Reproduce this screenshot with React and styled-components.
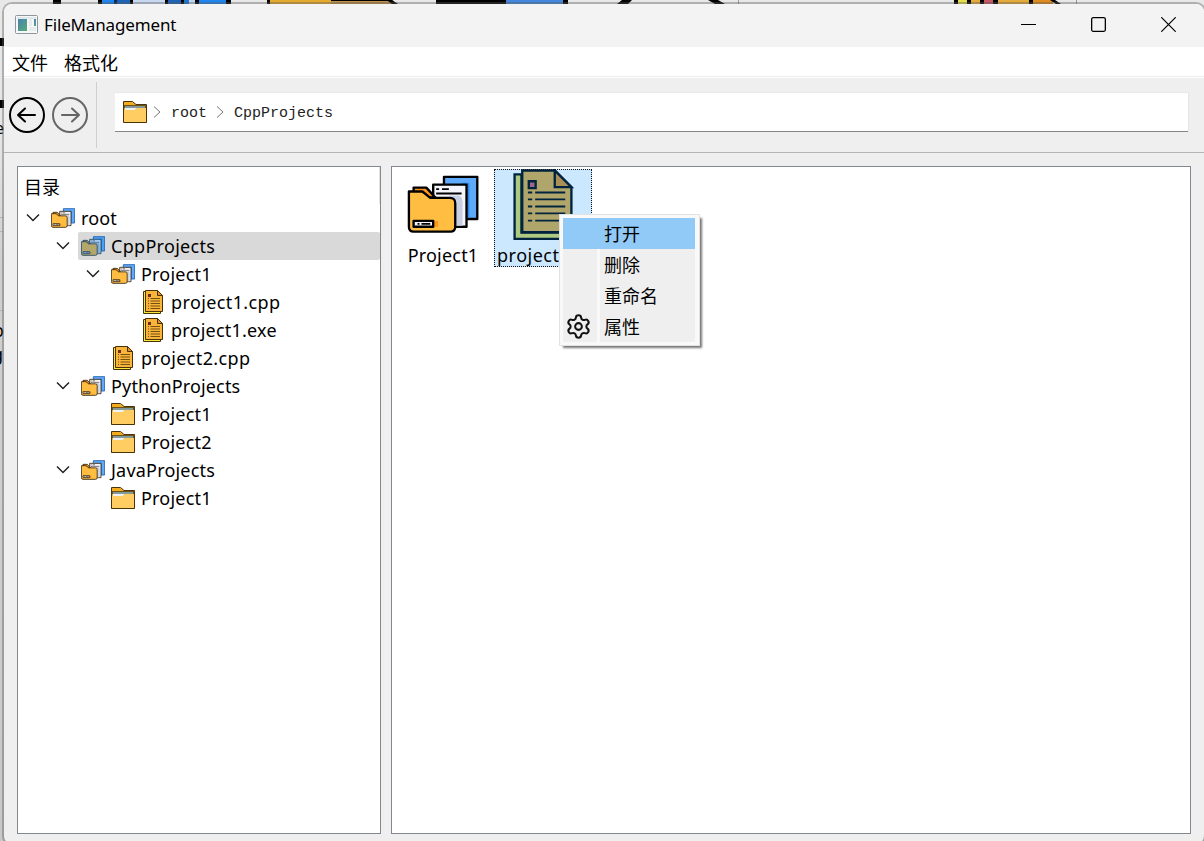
import React from 'react';
import styled, { createGlobalStyle, css } from 'styled-components';
import { Settings } from 'lucide-react';

const Global = createGlobalStyle`
  * { box-sizing: border-box; }
  body { margin: 0; overflow: hidden; }
`;

const Desktop = styled.div`
  position: relative;
  width: 1204px;
  height: 841px;
  overflow: hidden;
  padding: 2px 0 0 2px;
  background: linear-gradient(#e8e8e8, #e4e4e4 150px, #cfcfcf 260px, #cfcfcf 460px, #c8c8c8);
  font-family: 'Noto Sans', 'Noto Sans CJK SC', sans-serif;
  font-size: 18px;
  color: #000;
`;

const Backdrop = styled.svg`
  position: absolute;
  left: 0;
  top: 0;
`;

const Window = styled.div`
  position: relative;
  display: flex;
  flex-direction: column;
  width: 1204px;
  height: 844px;
  border: 2px solid rgba(90, 90, 90, 0.4);
  border-radius: 10px;
  background: #efefef;
  background-clip: padding-box;
  overflow: hidden;
`;

const TitleBar = styled.header`
  display: flex;
  align-items: center;
  height: 43px;
  flex: none;
  padding: 0 1px 2px 11px;
  background: #f3f3f3;
`;

const Title = styled.span`
  flex: 1;
  margin: 0 0 0 6px;
  font-size: 17px;
  letter-spacing: -0.15px;
`;

const Caption = styled.button`
  display: flex;
  align-items: center;
  justify-content: center;
  width: 70px;
  height: 41px;
  padding: 0;
  border: 0;
  background: none;
`;

const MenuBar = styled.nav`
  display: flex;
  align-items: center;
  gap: 16px;
  height: 31px;
  flex: none;
  padding: 0 8px 2px;
  background: linear-gradient(#fff 29px, #eeeeee 29px, #eeeeee 30px, #fff 30px);
`;

const ToolBar = styled.div`
  display: flex;
  align-items: center;
  height: 75px;
  flex: none;
  padding-left: 4px;
  border-bottom: 1px solid #b4b4b4;
`;

const RoundButton = styled.button`
  display: flex;
  width: 38px;
  height: 38px;
  margin-right: 5px;
  padding: 0;
  border: 0;
  background: none;
  color: ${(p) => (p.$muted ? '#666' : '#000')};
`;

const Divider = styled.i`
  width: 1px;
  height: 66px;
  margin: 0 18px 0 2px;
  background: #cfcfcf;
`;

const Address = styled.div`
  display: flex;
  align-items: center;
  width: 1073px;
  height: 39px;
  margin-bottom: 5px;
  padding-left: 8px;
  background: #fff;
  border-bottom: 1px solid #858585;
  box-shadow: 0 -1px #e9e9e9, 1px 0 #e5e5e5;
  font-family: 'Liberation Mono', monospace;
  font-size: 15px;
  color: #222;
`;

const Crumb = styled.span`
  width: ${(p) => p.$width}px;
  margin: 3px 0 0 10px;
`;

const CrumbArrow = styled.svg`
  margin-left: ${(p) => p.$gap}px;
`;

const Panels = styled.main`
  display: flex;
  gap: 10px;
  padding: 13px 0 0 13px;
`;

const Panel = styled.section`
  width: ${(p) => p.$width}px;
  height: 668px;
  background: #fff;
  border: 1px solid #828790;
`;

const TreeHeader = styled.div`
  display: flex;
  align-items: center;
  height: 37px;
  padding: 1px 0 0 6px;
  border-right: 1px solid #e4e4e4;
`;

const TreeRow = styled.div`
  display: flex;
  align-items: center;
  height: 28px;
  padding-left: ${(p) => p.$level * 30}px;
`;

const Toggle = styled.span`
  display: flex;
  justify-content: center;
  width: 30px;
  flex: none;
  padding: 0 1px 1px 0;
`;

const TreeCell = styled.div`
  display: flex;
  align-items: center;
  flex: 1;
  height: 28px;
  padding-left: 3px;
  border-radius: 2px;
  background: ${(p) => (p.$selected ? '#d9d9d9' : 'transparent')};
`;

const TreeLabel = styled.span`
  margin-left: 6px;
  letter-spacing: ${(p) => p.$track ?? 0}px;
  white-space: pre;
`;

const Files = styled.div`
  display: flex;
  align-items: flex-start;
  padding: 2px 0 0 1px;
`;

const FileItem = styled.div`
  display: flex;
  flex-direction: column;
  align-items: center;
  width: 98px;
  height: 98px;
  margin-right: 3px;
  padding-left: ${(p) => (p.$selected ? 0 : 2)}px;
  ${(p) =>
    p.$selected &&
    css`
      background: #cce8ff;
      outline: 1px dotted #111;
      outline-offset: -1px;
    `}
`;

const FileName = styled.span`
  max-width: 100%;
  padding: 0 3px;
  overflow: hidden;
  line-height: 26px;
  margin-top: 2px;
  letter-spacing: ${(p) => p.$track ?? 0}px;
`;

const ContextMenu = styled.div`
  position: absolute;
  left: 555px;
  top: 210px;
  width: 141px;
  height: 132px;
  padding: 3px;
  border: 1px solid #e2e2e2;
  background: #f9f9f9;
  box-shadow: 3px 3px 2px -1px #777;
`;

const MenuItem = styled.div`
  display: flex;
  align-items: center;
  width: 132px;
  height: 31px;
  padding-bottom: 2px;
  background: ${(p) =>
    p.$active ? '#91c9f7' : 'linear-gradient(90deg, #efefef 34px, #f8f8f8 34px, #f8f8f8 37px, #efefef 37px)'};
`;

const MenuGlyph = styled.span`
  display: flex;
  justify-content: center;
  width: 31px;
  margin: 1px 10px 0 0;
`;

const normal = {
  line: '#000', blue: '#60aafc', blueShade: '#318bea', paper: '#f4f5fc', shade: '#c9cfe2',
  body: '#ffbe42', tab: '#ff951d', back: '#fff06a', page: '#f9b43b', fold: '#e88b28', pin: '#d66868',
};
const picked = {
  line: '#00243f', blue: '#4aa0f2', blueShade: '#207bd3', paper: '#a9cbee', shade: '#7ca9d0',
  body: '#b3a76c', tab: '#a58a48', back: '#aeca80', page: '#b0a56a', fold: '#aa9057', pin: '#9e6687',
};

const small = { ...normal, line: '#3a2a10', back: '#f7ec3a' };
const smallPicked = { ...picked, line: '#24486a' };

function Files3({ size = 24, c = normal }) {
  const s = size < 30;
  return (
    <svg width={size} height={size} viewBox="0 0 72 72" stroke={c.line} strokeWidth={s ? 2.6 : 2.4} strokeLinejoin="round">
      <path d="M37 8H71V51H37Z" fill={c.blue} stroke={s ? '#1d5fae' : c.line} />
      <path d="M55 14h8v36h-4V20h-4Z" fill={c.blueShade} stroke="none" />
      <path d="M26 16H60V59H26Z" fill={c.paper} />
      <path d="M42 27h9q5 0 5 7v24h-7V34Z" fill={c.shade} stroke="none" />
      <path d="M29 20.5h3M35 20.5h7M29 25h26" strokeWidth="1.9" />
      <path d="M6 24V19H19L28 29H20Z" fill={c.tab} />
      <path d="M1.2 23H15L23 29.5H43Q48.500 29.500 48.500 35V59Q48.500 64 43.500 64H6Q1.200 64 1.200 59Z" fill={c.body} />
      <path d="M27 53h4v6h-4Z" fill={c.tab} stroke="none" />
      <path d="M6 53H26V59H6Z" fill={c.paper} />
      <path d="M10 56h2M14 56h9" strokeWidth="1.9" />
    </svg>
  );
}

function SmallDoc() {
  return (
    <svg width="24" height="24" viewBox="0 0 24 24" stroke="#4a3206">
      <path d="M2.500 1.500H5V21.500H19.500V23.500H2.500Z" fill="#f5ea3c" />
      <path d="M4.500 .5H16.500L21.500 5.500V21.500H4.500Z" fill="#f9b43b" />
      <path d="M16.500 .5V5.500H21.500Z" fill="#e88b28" />
      <path d="M7 4H10V7H7Z" fill="#6b2c1c" stroke="none" />
      <path d="M7 8.500H8M9.500 8.500H19M7 11H8M9.500 11H19M7 13.500H8M9.500 13.500H19M7 16H8M9.500 16H19M7 18.500H8M9.500 18.500H19" stroke="#75500f" />
    </svg>
  );
}

function Doc({ c = normal }) {
  return (
    <svg width="72" height="72" viewBox="0 0 72 72" stroke={c.line} strokeWidth="2.4">
      <path d="M7 5.500H14V65H57V71.500H7Z" fill={c.back} />
      <path d="M14.800 1.500H48L65 18.500V64.500H14.800Z" fill={c.page} />
      <path d="M48 1.500V18.500H65Z" fill={c.fold} />
      <path d="M21.500 12.500H28.500V19.500H21.500Z" fill={c.pin} />
      <path
        d="M20.600 24H25M28 24H58.700M20.600 31H25M28 31H58.700M20.600 38.300H25M28 38.300H58.700M20.600 45.300H25M28 45.300H58.700M20.600 52.700H25M28 52.700H58.700"
        strokeWidth="2"
      />
    </svg>
  );
}

function Folder() {
  return (
    <svg width="24" height="24" viewBox="0 0 24 24" stroke="#4b3508" strokeLinejoin="round">
      <path d="M.5 22.500V1.500H9.500L13 4.500H23.500V22.500Z" fill="#f3ab1f" />
      <path d="M1 5H23V8H1Z" fill="#6b5415" stroke="none" />
      <path d="M2 6H22V8.500H2Z" fill="#84999a" stroke="none" />
      <path d="M2 8H14L12 10H2Z" fill="#eef3f5" stroke="none" />
      <path d="M1 10H11.500L14.500 8H23V22H1Z" fill="#ffcd62" stroke="none" />
      <path d="M.5 9V21.500Q.5 22.500 1.500 22.500H22.500Q23.500 22.500 23.500 21.500V5" fill="none" />
    </svg>
  );
}

const tree = [
  { level: 0, name: 'root', icon: 'set', open: true, track: 0.15 },
  { level: 1, name: 'CppProjects', icon: 'set', open: true, selected: true, track: 0.3 },
  { level: 2, name: 'Project1', icon: 'set', open: true, track: 0.2 },
  { level: 3, name: 'project1.cpp', icon: 'doc', track: 0.38 },
  { level: 3, name: 'project1.exe', icon: 'doc', track: 0.22 },
  { level: 2, name: 'project2.cpp', icon: 'doc', track: 0.38 },
  { level: 1, name: 'PythonProjects', icon: 'set', open: true, track: 0.16 },
  { level: 2, name: 'Project1', icon: 'folder', track: 0.2 },
  { level: 2, name: 'Project2', icon: 'folder', track: 0.2 },
  { level: 1, name: 'JavaProjects', icon: 'set', open: true, track: 0.2 },
  { level: 2, name: 'Project1', icon: 'folder', track: 0.2 },
];

function TreeIcon({ row }) {
  if (row.icon === 'doc') return <SmallDoc />;
  if (row.icon === 'folder') return <Folder />;
  return <Files3 c={row.selected ? smallPicked : small} />;
}

const Chevron = () => (
  <svg width="14" height="9" viewBox="0 0 14 9" fill="none" stroke="#222" strokeWidth="1.5">
    <path d="M1 1.500L7 7.500L13 1.500" />
  </svg>
);

const Arrow = ({ gap }) => (
  <CrumbArrow $gap={gap} width="8" height="12" viewBox="0 0 8 12" fill="none" stroke="#777">
    <path d="M1 .5L7 6L1 11.500" />
  </CrumbArrow>
);

const strip = [
  [53, 8, '#000'], [98, 4, '#000'], [102, 12, '#1f86f0'], [114, 3, '#062b55'], [117, 13, '#1b63b8'],
  [130, 3, '#000'], [133, 32, '#c8d8ee'], [165, 3, '#000'], [168, 13, '#1b63b8'], [181, 3, '#000'],
  [184, 5, '#1f75d5'], [189, 6, '#bed5ef'], [195, 4, '#000'], [199, 27, '#1f86f0'], [226, 5, '#000'],
  [267, 3, '#000'], [270, 61, '#e5aa2d'], [331, 62, '#bd9148'], [436, 70, '#000'], [506, 57, '#4488dd'],
  [563, 5, '#000'], [954, 4, '#000'], [958, 9, '#e7dc4c'], [967, 4, '#000'], [971, 9, '#e5aa3c'],
  [980, 4, '#000'], [984, 9, '#c65868'], [993, 5, '#000'], [998, 31, '#e5aa3c'], [1029, 4, '#000'],
  [1033, 20, '#de8c20'],
];

export default function App() {
  return (
    <>
      <Global />
      <Desktop>
        <Backdrop width="1204" height="841">
          {strip.map(([x, w, fill]) => (
            <rect key={x} x={x} y="0" width={w} height="4" fill={fill} />
          ))}
          <path d="M331 0H392L398 4H392L388 1H331ZM617 4L622 0H632L628 4ZM708 0H718L725 4H715ZM1050 0H1055L1061 4H1056Z" />
          <path d="M738.500 0V4M1076.500 0V4" stroke="#999" />
          <path d="M0 38H4V46H0ZM0 100H4V108H0Z" />
          <path d="M0 217.500H3M0 231.500H3M0 310.500H3" stroke="#b5b5b5" />
          <text x="-5" y="134" fontSize="16">e</text>
          <text x="-7" y="337" fontSize="18">o</text>
          <text x="-8" y="361" fontSize="18">g</text>
        </Backdrop>
        <Window>
          <TitleBar>
            <svg width="23" height="19" viewBox="0 0 23 19">
              <defs>
                <linearGradient id="pane" x2="1" y2="1">
                  <stop stopColor="#4a7fb5" />
                  <stop offset="1" stopColor="#55ad72" />
                </linearGradient>
              </defs>
              <rect x=".5" y=".5" width="22" height="18" rx="1" fill="#f5f7f8" stroke="#8f979e" />
              <path d="M2 2H21V4H2Z" fill="#dfe6ec" />
              <path d="M3 4H12V16H3Z" fill="url(#pane)" />
              <path d="M14 4H17V11H14ZM14 12H21V16H14Z" fill="#e9ebec" />
              <path d="M19 4H21V11H19Z" fill="url(#pane)" />
            </svg>
            <Title>FileManagement</Title>
            <Caption aria-label="Minimize">
              <svg width="15" height="15" stroke="#000"><path d="M0 7.500H15" /></svg>
            </Caption>
            <Caption aria-label="Maximize">
              <svg width="15" height="15" fill="none" stroke="#000" strokeWidth="1.300">
                <rect x=".65" y=".65" width="13.700" height="13.700" rx="1.500" />
              </svg>
            </Caption>
            <Caption aria-label="Close">
              <svg width="15" height="15" stroke="#000" strokeWidth="1.200"><path d="M.3 .3L14.700 14.700M14.700 .3L.3 14.700" /></svg>
            </Caption>
          </TitleBar>
          <MenuBar>
            <span>文件</span>
            <span>格式化</span>
          </MenuBar>
          <ToolBar>
            <RoundButton aria-label="Back">
              <svg width="38" height="38" fill="none" stroke="currentColor" strokeWidth="2" strokeLinecap="round" strokeLinejoin="round">
                <circle cx="19" cy="19" r="17" />
                <path d="M27 19H10M17 12.500L10 19L17 25.500" />
              </svg>
            </RoundButton>
            <RoundButton aria-label="Forward" $muted>
              <svg width="38" height="38" fill="none" stroke="currentColor" strokeWidth="2" strokeLinecap="round" strokeLinejoin="round">
                <circle cx="19" cy="19" r="17" />
                <path d="M11 19H28M21 12.500L28 19L21 25.500" />
              </svg>
            </RoundButton>
            <Divider />
            <Address>
              <Folder />
              <Arrow gap={6} />
              <Crumb $width={36}>root</Crumb>
              <Arrow gap={9} />
              <Crumb $width={110}>CppProjects</Crumb>
            </Address>
          </ToolBar>
          <Panels>
            <Panel $width={364}>
              <TreeHeader>目录</TreeHeader>
              {tree.map((row, i) => (
                <TreeRow key={i} $level={row.level}>
                  <Toggle>{row.open && <Chevron />}</Toggle>
                  <TreeCell $selected={row.selected}>
                    <TreeIcon row={row} />
                    <TreeLabel $track={row.track}>{row.name}</TreeLabel>
                  </TreeCell>
                </TreeRow>
              ))}
            </Panel>
            <Panel $width={800}>
              <Files>
                <FileItem>
                  <Files3 size={72} />
                  <FileName $track={0.2}>Project1</FileName>
                </FileItem>
                <FileItem $selected>
                  <Doc c={picked} />
                  <FileName $track={0.5}>project2.cpp</FileName>
                </FileItem>
              </Files>
            </Panel>
          </Panels>
          <ContextMenu>
            <MenuItem $active><MenuGlyph />打开</MenuItem>
            <MenuItem><MenuGlyph />删除</MenuItem>
            <MenuItem><MenuGlyph />重命名</MenuItem>
            <MenuItem><MenuGlyph><Settings size={27} strokeWidth={1.8} color="#111" /></MenuGlyph>属性</MenuItem>
          </ContextMenu>
        </Window>
      </Desktop>
    </>
  );
}
